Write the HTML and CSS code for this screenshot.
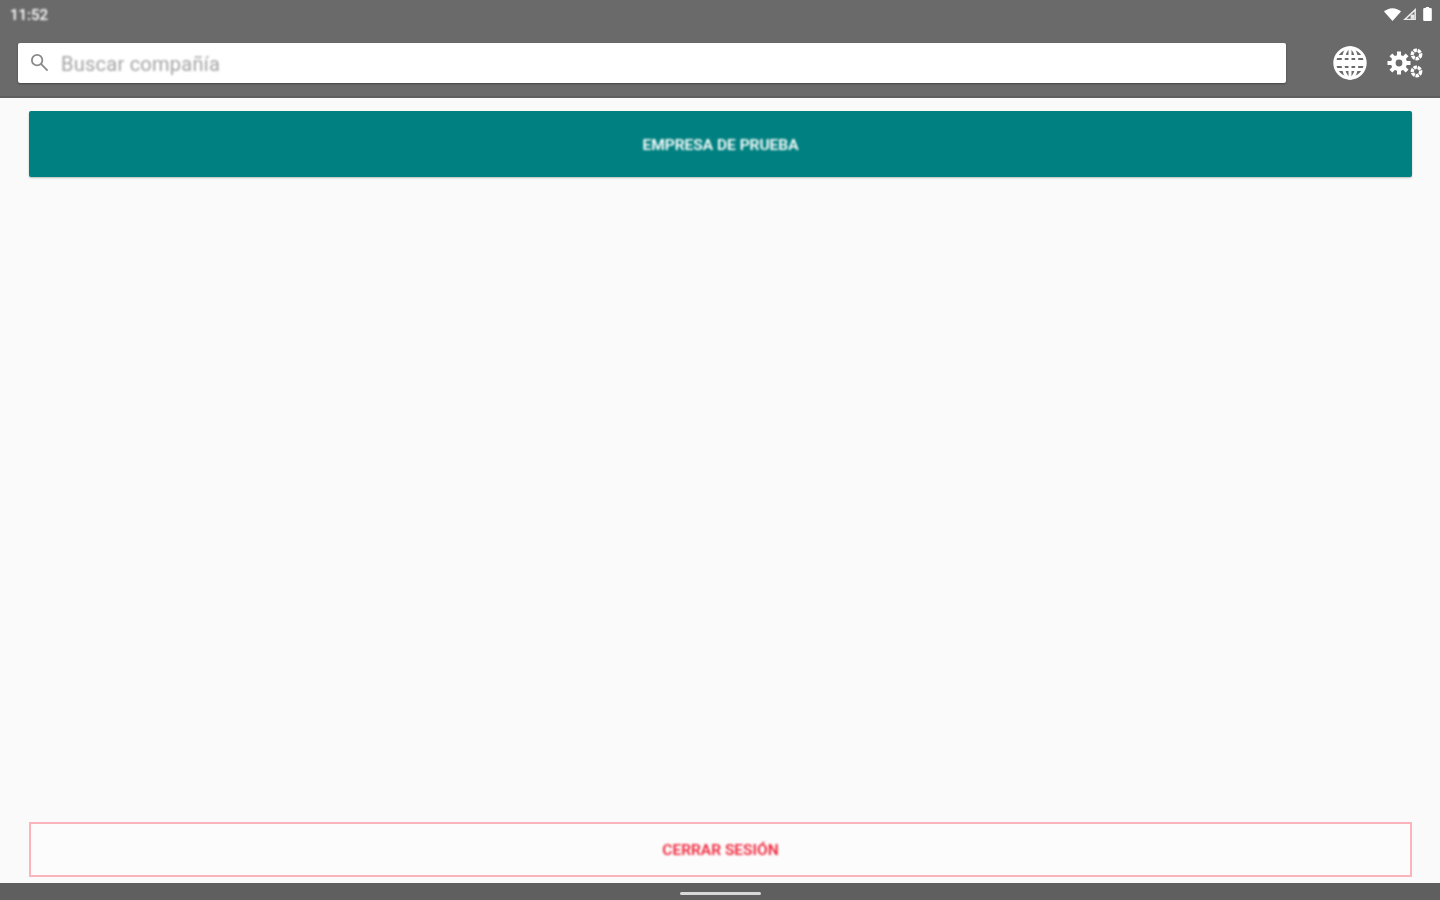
FILE: index.html
```html
<!DOCTYPE html>
<html lang="es">
<head>
<meta charset="utf-8">
<title>Buscar compañía</title>
<link rel="stylesheet" href="styles.css">
</head>
<body>
<div class="app">
  <header class="header">
    <div class="status">
      <span class="time">11:52</span>
      <div class="status-icons">
        <svg class="ic-wifi" viewBox="0 0 16 12"><path d="M0 3.200C2 1.200 5 0 8 0s6 1.200 8 3.200L8 12z"/></svg>
        <svg class="ic-signal" viewBox="0 0 14 13"><path d="M13 1v11H1zM11.600 4.400 4.400 11h7.200z" fill-rule="evenodd"/><path d="M8 7h3.600v4H8z"/></svg>
        <svg class="ic-battery" viewBox="0 0 8 13"><path d="M2.500 0h3v1H7a1 1 0 0 1 1 1v10a1 1 0 0 1-1 1H1a1 1 0 0 1-1-1V2a1 1 0 0 1 1-1h1.500z"/></svg>
      </div>
    </div>
    <div class="toolbar">
      <div class="search">
        <svg class="ic-search" viewBox="0 0 20 20"><circle cx="7.500" cy="7.500" r="5.500"/><path d="m11.500 11.500 7 7"/></svg>
        <span class="placeholder">Buscar compañía</span>
      </div>
      <div class="actions">
        <svg class="ic-globe" viewBox="0 0 34 34">
          <circle cx="17" cy="17" r="15.200"/>
          <ellipse cx="17" cy="17" rx="7" ry="15.200"/>
          <path d="M17 2v30M3.500 10.500h27M3.500 23.500h27"/>
          <path class="globe-band" d="M2.500 17h29"/>
        </svg>
        <svg class="ic-gears" viewBox="0 0 36 32">
          <circle class="gear-body" cx="12" cy="16" r="8"/>
          <path class="gear-teeth" d="M12 4.500v23M.5 16h23M3.900 7.900l16.200 16.200M20.100 7.900 3.900 24.100"/>
          <circle class="gear-hole" cx="12" cy="16" r="3.400"/>
          <circle class="gear-small" cx="29.500" cy="7.500" r="4.200"/>
          <circle class="gear-small" cx="29.500" cy="24.500" r="4.200"/>
        </svg>
      </div>
    </div>
  </header>
  <main class="content">
    <div class="company"><span class="label">EMPRESA DE PRUEBA</span></div>
    <div class="logout"><span class="label">CERRAR SESIÓN</span></div>
  </main>
  <footer class="navbar"><span class="handle"></span></footer>
</div>
</body>
</html>
```

FILE: styles.css
```css
* { box-sizing: border-box; }
html, body { margin: 0; height: 100%; }
body { background: #fafafa; font-family: Roboto, "Liberation Sans", sans-serif; overflow: hidden; }
.app { display: flex; flex-direction: column; height: 900px; width: 1440px; }

.header { background: #6a6a6a; height: 98px; flex: none; border-bottom: 2px solid #5e5e5e; box-shadow: 0 1px 1px #e6e6e6; }
.status { height: 28px; display: flex; align-items: center; justify-content: space-between; padding: 1px 8px 0 10px; }
.time { display: block; color: #fff; font-size: 15px; font-weight: 500; filter: blur(0.8px); }
.status-icons { display: flex; align-items: center; gap: 1px; filter: blur(0.6px); margin-top: -1px; }
.status-icons svg { fill: #fff; display: block; }
.ic-wifi { width: 17px; height: 13px; }
.ic-signal { width: 15px; height: 14px; margin-right: 5px; opacity: .85; }
.ic-battery { width: 9px; height: 14px; }

.toolbar { display: flex; align-items: flex-start; padding: 15px 18px 0 18px; }
.search { flex: none; width: 1268px; height: 40px; background: #fff; border-radius: 2px; display: flex; align-items: center; padding-left: 12px; box-shadow: 0 1px 2px rgba(0,0,0,.35); }
.ic-search { width: 19px; height: 19px; margin-top: -2px; fill: none; stroke: #8a8a8a; stroke-width: 1.900; filter: blur(0.6px); flex: none; }
.placeholder { margin-left: 12px; margin-top: 2px; font-size: 20px; color: #a3a3a3; letter-spacing: .25px; filter: blur(0.8px); }
.actions { display: flex; align-items: center; gap: 20px; margin-left: 47px; padding-top: 3px; filter: blur(0.7px); }
.ic-globe { flex: none; width: 34px; height: 34px; fill: none; stroke: #fff; stroke-width: 3; }
.globe-band { stroke-width: 6; }
.ic-gears { flex: none; width: 36px; height: 32px; fill: none; }
.gear-body { fill: #fff; }
.gear-teeth { stroke: #fff; stroke-width: 4; }
.gear-hole { fill: #6a6a6a; }
.gear-small { stroke: #fff; stroke-width: 3.400; stroke-dasharray: 3.300 .8; }

.content { flex: 1; display: flex; flex-direction: column; justify-content: space-between; padding: 13px 28px 6px 29px; background: #fafafa; }
.company { height: 66px; background: #008080; border-radius: 2px; color: #fff; display: flex; align-items: center; justify-content: center; padding-top: 1px; box-shadow: 0 1px 2px rgba(0,0,0,.25); }
.logout { height: 55px; border: 2px solid #fbb4bb; color: #f0263c; display: flex; align-items: center; justify-content: center; background: #fcfcfc; }
.label { display: block; font-size: 15.500px; font-weight: 600; letter-spacing: 0; filter: blur(0.8px); }

.navbar { height: 17px; flex: none; background: #5f5f5f; display: flex; justify-content: center; align-items: flex-start; padding-top: 9px; }
.handle { width: 81px; height: 3px; background: #d8d8d8; border-radius: 2px; }
```
